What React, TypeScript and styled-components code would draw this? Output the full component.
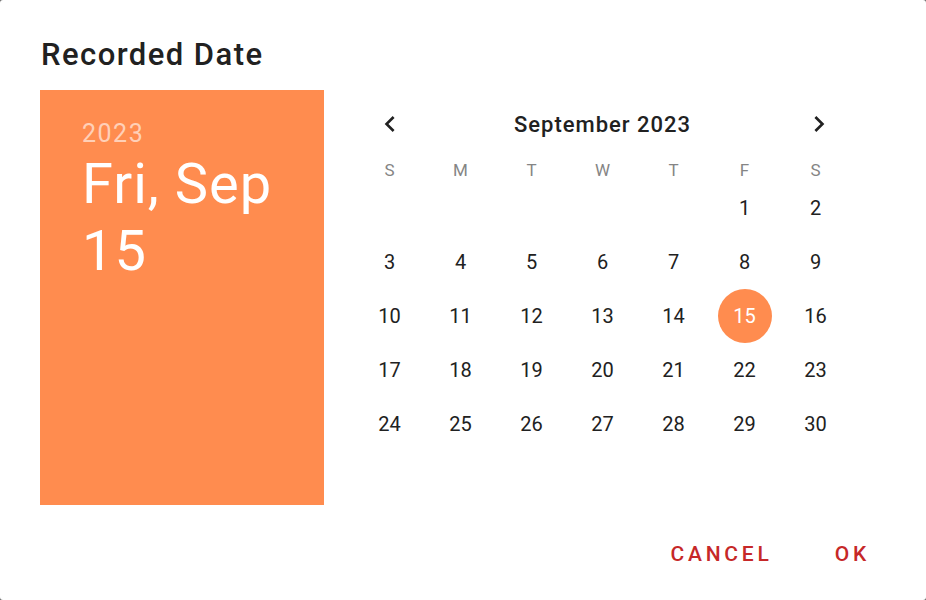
import React from "react";
import styled, { createGlobalStyle } from "styled-components";

const Global = createGlobalStyle`
  html, body {
    margin: 0;
    padding: 0;
    background: #6b6b6b;
    font-family: Roboto, "Noto Sans", Arial, sans-serif;
  }
  #root { width: 926px; height: 600px; }
`;

const Dialog = styled.div`
  width: 926px;
  height: 600px;
  box-sizing: border-box;
  background: #ffffff;
  border-radius: 3px;
  display: flex;
  flex-direction: column;
`;

const Title = styled.h2`
  margin: 0;
  padding: 37px 40px 0 41px;
  font-size: 31px;
  line-height: 36px;
  font-weight: 500;
  letter-spacing: 1.45px;
  color: #212121;
`;

const Body = styled.div`
  display: flex;
  flex-direction: row;
  margin-top: 17px;
  padding-left: 40px;
`;

const Panel = styled.div`
  width: 284px;
  height: 415px;
  box-sizing: border-box;
  padding: 27px 0 0 42px;
  background: #ff8c4f;
  color: #ffffff;
`;

const Year = styled.div`
  font-size: 25px;
  line-height: 34px;
  letter-spacing: 1.5px;
  color: rgba(255, 255, 255, 0.6);
`;

const BigDate = styled.div`
  font-size: 56px;
  line-height: 67px;
  font-weight: 400;
  letter-spacing: 1px;
  max-width: 230px;
`;

const Calendar = styled.div`
  margin-left: 30px;
  padding-top: 10px;
  width: 497px;
`;

const Header = styled.div`
  display: grid;
  grid-template-columns: repeat(7, 71px);
  height: 48px;
  align-items: center;
`;

const NavButton = styled.button<{ $shift?: number }>`
  width: 32px;
  height: 32px;
  padding: 0;
  border: none;
  background: transparent;
  justify-self: center;
  display: flex;
  align-items: center;
  justify-content: center;
  transform: translateX(${(p) => p.$shift ?? 0}px);
  cursor: pointer;
`;

const MonthLabel = styled.div`
  grid-column: 2 / 7;
  text-align: center;
  font-size: 22px;
  font-weight: 500;
  letter-spacing: 1px;
  color: #212121;
`;

const Weekdays = styled.div`
  display: grid;
  grid-template-columns: repeat(7, 71px);
  height: 20px;
  margin-top: 12px;
  align-items: center;
`;

const Weekday = styled.div`
  text-align: center;
  font-size: 17px;
  line-height: 20px;
  color: #858585;
`;

const Days = styled.div`
  display: grid;
  grid-template-columns: repeat(7, 71px);
  grid-auto-rows: 54px;
  margin-top: 1px;
`;

const Day = styled.div<{ $selected?: boolean }>`
  justify-self: center;
  width: 54px;
  height: 54px;
  border-radius: 50%;
  display: flex;
  align-items: center;
  justify-content: center;
  font-size: 20px;
  color: ${(p) => (p.$selected ? "#ffffff" : "#212121")};
  background: ${(p) => (p.$selected ? "#ff8c4f" : "transparent")};
`;

const Actions = styled.div`
  display: flex;
  justify-content: flex-end;
  gap: 30px;
  margin-top: 25px;
  padding-right: 40px;
`;

const ActionButton = styled.button`
  height: 48px;
  padding: 0 16px;
  border: none;
  background: transparent;
  font-family: Roboto, "Noto Sans", Arial, sans-serif;
  font-size: 21px;
  font-weight: 500;
  letter-spacing: 3.8px;
  color: #c62828;
  cursor: pointer;
`;

const ChevronLeft = () => (
  <svg width="32" height="32" viewBox="0 0 24 24" fill="#212121">
    <path d="M15.41 7.41 14 6l-6 6 6 6 1.41-1.41L10.83 12z" />
  </svg>
);

const ChevronRight = () => (
  <svg width="32" height="32" viewBox="0 0 24 24" fill="#212121">
    <path d="M10 6 8.59 7.41 13.17 12l-4.58 4.59L10 18l6-6z" />
  </svg>
);

const weekdays = ["S", "M", "T", "W", "T", "F", "S"];

export default function App() {
  const offset = 5;
  const cells: (number | null)[] = [];
  for (let i = 0; i < offset; i++) cells.push(null);
  for (let d = 1; d <= 30; d++) cells.push(d);

  return (
    <>
      <Global />
      <Dialog>
        <Title>Recorded Date</Title>
        <Body>
          <Panel>
            <Year>2023</Year>
            <BigDate>Fri, Sep 15</BigDate>
          </Panel>
          <Calendar>
            <Header>
              <NavButton aria-label="Previous month">
                <ChevronLeft />
              </NavButton>
              <MonthLabel>September 2023</MonthLabel>
              <NavButton aria-label="Next month" $shift={3}>
                <ChevronRight />
              </NavButton>
            </Header>
            <Weekdays>
              {weekdays.map((w, i) => (
                <Weekday key={i}>{w}</Weekday>
              ))}
            </Weekdays>
            <Days>
              {cells.map((d, i) =>
                d === null ? (
                  <div key={i} />
                ) : (
                  <Day key={i} $selected={d === 15}>
                    {d}
                  </Day>
                )
              )}
            </Days>
          </Calendar>
        </Body>
        <Actions>
          <ActionButton>CANCEL</ActionButton>
          <ActionButton>OK</ActionButton>
        </Actions>
      </Dialog>
    </>
  );
}
